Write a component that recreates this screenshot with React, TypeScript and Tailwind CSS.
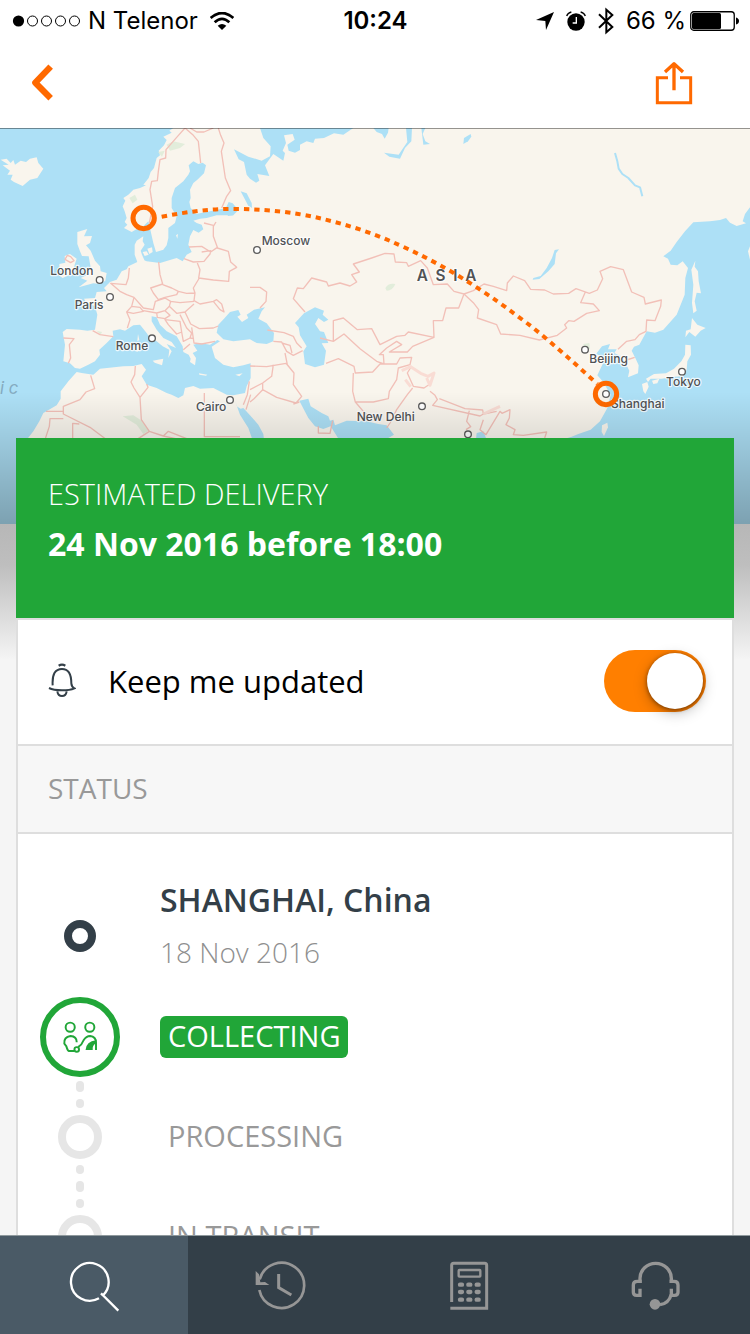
import React from 'react';

type Point = [x: number, y: number];

const LAND = '#f9f5ed';
const WATER = '#ade0f6';

const waters: string[] = [
  // Atlantic, North Sea, Baltic and Mediterranean
  'M0 0H520L508 8L515 14L490 26L500 36L492 52L476 68L480 82L470 90L462 120L452 132L446 150L430 170L438 172L420 180L400 185L385 200L370 210L376 218L368 235L374 250L380 270L374 282L382 290L372 300L395 312L412 302L430 295L445 280L452 310L460 345L468 372L490 365L500 352L505 330L505 300L525 285L530 265L515 240L515 210L525 180L550 160L565 140L570 130L566 112L580 100L595 108L608 104L618 112L612 136L592 155L580 165L570 185L572 210L568 222L572 240L588 258L630 250L680 240L700 262L650 262L620 270L600 272L580 278L590 285L605 290L610 304L596 314L580 306L570 325L565 350L575 372L560 380L548 400L530 390L510 396L480 405L440 400L415 390L412 402L385 415L380 424L365 430L350 455L330 462L312 480L320 490L290 492L285 510L252 512L258 522L285 535L292 560L285 605L262 608L240 605L200 603L188 612L195 650L190 700L210 706L225 720L240 722L265 710L285 700L300 680L298 665L320 645L340 625L338 608L360 604L375 608L400 592L420 590L440 615L450 630L470 640L488 655L508 665L505 690L515 670L500 648L528 660L515 642L490 630L470 605L455 580L455 565L470 568L480 590L500 610L530 625L548 655L550 672L566 680L572 692L570 702L585 712L588 690L578 675L592 668L580 650L600 645L630 650L652 636L660 640L635 656L645 690L670 710L700 718L730 712L752 706L752 750L740 775L735 795L700 802L680 800L640 780L600 782L580 774L555 780L550 802L535 810L515 800L500 795L470 780L440 770L425 745L438 725L425 708L400 714L370 715L300 722L280 740L245 735L230 732L205 760L182 790L182 812L170 832L130 855L118 880L100 910L80 935L60 1188H0Z',
  // Black Sea and Azov
  'M650 614L655 590L672 572L690 552L715 546L722 560L712 566L726 582L745 570L740 560L762 545L795 538L785 550L775 572L800 586L822 615L820 640L800 648L770 645L750 634L700 640L670 634Z',
  // Caspian
  'M885 585L912 556L945 538L972 548L968 560L985 575L972 582L955 570L945 588L960 610L972 612L985 645L965 646L978 668L972 710L945 718L915 708L910 670L920 655L900 622L896 598Z',
  // Persian Gulf and Arabian Sea
  'M898 818L925 812L932 835L965 855L985 865L990 878L1000 875L1005 892L1040 878L1100 880L1135 888L1160 892L1182 920L1165 930L1190 945L1200 1188H1060L1020 940L992 895L970 903L945 895L925 870L912 845Z',
  // Red Sea
  'M704 815L712 836L722 842L730 840L750 862L775 890L790 918L800 1000L780 1000L745 900L720 860Z',
  // White Sea and Arctic coast
  'M780 0L790 30L812 55L810 85L785 98L745 86L702 64L716 94L732 102L740 140L750 152L768 164L778 158L772 138L808 144L795 112L820 78L850 98L855 75L848 68L858 45L852 22L878 18L884 35L862 50L866 68L885 74L900 66L900 50L920 40L940 45L945 32L972 30L1002 16L1030 20L1060 0Z',
  'M1120 0H1166L1164 14L1154 32L1146 18L1130 12Z',
  'M1218 0H1236L1234 40L1215 60L1200 92L1168 86L1152 74L1196 80L1208 62L1222 42Z',
  'M1264 0H1276L1268 18L1276 40L1290 48L1270 50Z',
  'M1390 48L1392 30L1412 18L1414 26L1404 40Z',
  // Ladoga and Onega
  'M676 244L686 222L698 226L715 246L700 262L684 264Z',
  'M722 190L740 196L755 225L756 240L744 232Z',
  // Baikal
  'M1677 364L1668 376L1664 408L1645 430L1618 453L1598 455L1600 450L1622 444L1640 420L1656 390L1664 366Z',
  // Pacific, Sea of Japan, Yellow Sea
  'M2250 238L2235 258L2228 280L2238 286L2210 294L2190 284L2178 270L2160 276L2130 280L2080 283L2055 310L2030 342L2012 368L1990 385L2004 392L2012 410L2032 412L2048 400L2064 420L2056 450L2054 500L2030 560L1990 605L1965 614L1940 610L1918 650L1902 656L1895 668L1906 690L1916 712L1914 736L1884 748L1888 728L1874 700L1862 684L1836 672L1808 686L1788 678L1806 655L1830 648L1824 664L1850 664L1840 680L1812 700L1792 742L1808 760L1832 800L1822 840L1800 880L1772 905L1735 918L1715 926L1650 945L1600 1000V1188H2250Z',
  'M1430 915L1450 910L1460 935L1480 1188H1400Z',
];

const lands: string[] = [
  'M2 95L20 92L32 105L40 96L45 110L62 98L78 102L90 92L110 88L115 105L130 122L112 150L90 155L68 174L42 162L32 155L38 140L22 140L30 128L8 112L26 110Z',
  'M232 312L262 303L252 325L276 324L270 345L258 352L272 368L285 398L300 415L302 430L320 435L316 458L300 468L280 466L236 478L262 458L242 450L262 440L252 425L272 418L266 385L246 384L240 370L232 348Z',
  'M178 408L196 404L194 384L210 378L230 392L224 410L218 436L188 450L176 442L190 430L178 425Z',
  'M404 350L410 338L430 325L428 340L434 350L422 368L426 380L434 398L412 402L404 380Z',
  'M428 372L440 370L446 380L434 384ZM442 362L456 358L458 372L448 378Z',
  'M414 618L418 636L412 640ZM408 648L418 646L418 668L410 672Z',
  'M458 698L490 692L486 712L464 704Z',
  'M597 736L622 740L618 743L598 740ZM706 740L728 736L718 745Z',
  'M528 322L534 318L532 332Z',
  'M2086 398L2084 416L2094 430L2096 460L2103 496L2090 494L2084 520L2090 548L2080 556L2076 525L2080 470L2074 425Z',
  'M2076 570L2092 590L2117 600L2102 608L2086 626L2068 612L2056 628L2058 608L2072 604Z',
  'M2056 650L2072 652L2073 680L2062 700L2060 725L2048 745L2020 746L1985 752L1952 752L1944 762L1938 752L1962 738L1998 736L2022 722L2044 700L2055 680Z',
  'M1926 768L1942 762L1946 776L1936 798L1930 790ZM1956 758L1978 752L1972 766L1960 768Z',
  'M1806 892L1822 884L1824 898L1812 924L1805 912Z',
  'M2250 355L2244 370L2250 395Z',
];

const borders: string[] = [
  // Scandinavia and Finland
  'M555 0L530 28L498 65L497 90L480 95L475 130L472 158L455 160L450 185L458 235L448 285M555 0L580 22L595 40L602 105M570 0L590 12L612 12L640 0M655 0L662 22L672 45L664 70L676 150L692 188L680 205L665 240',
  // Eastern Europe
  'M648 282L640 295L640 325L652 358L632 372L605 355L567 357M612 285L640 292M605 372L632 368L630 378L612 400L580 402L552 392M652 360L685 370L692 402L710 418L688 430L686 460L640 456L596 450L600 425L592 405M476 402L480 440L488 468L452 480L460 495L475 515L495 508L530 500L535 490L515 480L488 470M535 490L560 496L585 495L580 480L598 450M585 495L582 518L600 528L640 520L660 545L672 552L665 528L650 515L640 520',
  // Western and central Europe
  'M388 420L385 450L378 470L332 466L360 490L380 500L402 508L395 535L380 552L390 575L382 600M402 508L430 540L460 545L466 520L495 510L512 520L508 535L495 548L470 555L430 548M380 552L400 556L430 550L420 538L395 535M512 520L540 524L582 520M508 535L530 556L555 552L582 528M470 555L472 568L495 572L510 562L495 548M495 575L540 580L545 612L530 618L505 590ZM540 560L560 600L575 615L570 630L550 640L545 612M555 552L572 588L598 602L640 600L655 594M575 598L582 645L605 648L645 640M570 630L582 632M550 665L570 648M278 608L300 620L340 626M190 630L222 632L208 650L212 690L205 706',
  // Africa and the Levant
  'M406 714L404 740L393 762L402 780L420 808L424 875L448 910L410 935M420 808L444 778L440 768M272 742L284 782L258 792L240 815L190 835L190 858L270 898L320 935M190 850H138M190 872H150L148 895L135 935M218 935V886L238 888M448 910L490 924L540 935M490 924L505 910L560 932M613 795V926H720M748 760L742 800L730 830M752 800L738 845',
  // Middle East
  'M750 714L800 716L858 706L882 735L880 770L905 805L888 825L830 808L788 785L762 812L750 822M820 710L815 745L788 765L750 785M788 765L788 785M802 606L852 614L880 625L890 645L905 660M820 640L845 642L860 670L880 682L908 668M845 645L870 652L876 675M855 675L862 710L882 735M898 822L880 828M955 895L955 915L990 916L998 878M750 478L780 478L800 492L798 520L780 540',
  // Kazakhstan and Central Asia
  'M915 552L880 512L892 480L910 482L935 450L980 462L985 474L1020 465L1050 474L1070 462L1055 440L1078 432L1060 408L1115 390L1155 376L1182 378L1186 402L1220 404L1225 415L1262 398L1282 420L1300 470L1342 468L1362 490L1392 498L1376 540L1338 540L1328 578L1300 578L1302 628L1225 612L1215 622L1190 625L1140 650L1115 602L1072 605L1030 570L1000 578V640L960 630',
  'M1000 640L1032 618L1080 662L1130 700L1152 708L1150 680L1138 680L1160 660L1190 640L1205 650L1168 672L1222 672L1238 655L1302 628M978 706L1015 692L1062 715L1066 735L1118 732L1140 708L1190 708L1200 690L1235 688L1230 710L1195 720L1190 755L1168 790L1165 812L1120 822L1066 822L1058 790L1060 735M1066 822L1090 850L1110 870M1238 780L1222 800L1190 845L1170 885L1160 900',
  // Mongolia and China
  'M1392 498L1420 488L1452 468L1480 475L1520 488L1522 465L1540 444L1574 458L1592 484L1634 486L1660 498L1706 496L1728 482L1768 496L1792 486L1808 452L1800 430L1832 416L1870 425L1895 492L1932 508L1936 528L1984 516L1982 535L1965 578L1940 576L1938 610L1918 620L1905 635L1880 640L1854 664M1392 498L1420 524L1436 545L1432 570L1490 590L1502 618L1560 622L1618 636L1672 622L1700 600L1694 590L1706 578L1722 580L1760 556L1798 548L1780 528L1742 524L1756 492M1880 696L1904 688',
  // Himalaya and South-East Asia
  'M1235 714L1222 735L1240 775L1272 780L1290 768M1290 790L1305 802L1312 815L1298 832L1440 864L1450 858L1448 846L1395 842L1318 812M1450 858L1490 850M1408 848L1400 880L1412 896L1398 905M1450 875L1440 905L1458 920L1500 850L1506 856L1530 845L1528 870L1518 890L1545 905L1540 920L1570 922L1640 912L1634 930',
];

const cities: Point[] = [
  [299, 456], [330, 507], [456, 631], [690, 816], [771, 366], [1266, 835],
  [1404, 919], [1755, 665], [2046, 731], [1818, 798],
];

const cityLabels: { name: string; x: number; y: number }[] = [
  { name: 'London', x: 151, y: 440 },
  { name: 'Paris', x: 224, y: 542 },
  { name: 'Rome', x: 347, y: 667 },
  { name: 'Cairo', x: 588, y: 850 },
  { name: 'Moscow', x: 785, y: 351 },
  { name: 'New Delhi', x: 1070, y: 879 },
  { name: 'Beijing', x: 1768, y: 705 },
  { name: 'Tokyo', x: 1998, y: 774 },
  { name: 'Shanghai', x: 1833, y: 839 },
];

function RouteMap() {
  return (
    <svg
      viewBox="0 0 2250 1188"
      preserveAspectRatio="xMidYMin slice"
      className="block h-full w-full"
      role="img"
      aria-label="Route from Norway to Shanghai"
    >
      <rect width="2250" height="1188" fill={LAND} />
      {waters.map((d) => <path key={d} d={d} fill={WATER} />)}
      {lands.map((d) => <path key={d} d={d} fill={LAND} />)}
      <path d="M1845 75L1852 100L1856 122L1867 138L1885 150L1905 172L1920 178L1927 205" fill="none" stroke={WATER} strokeWidth="6" strokeLinejoin="round" />
      <g fill="#dcebd6" opacity="0.8">
        <path d="M500 50L520 40L555 48L540 60L510 68ZM474 72L494 68L486 86ZM388 210L405 200L412 215L398 226ZM290 608L306 612L302 620ZM368 865L400 862L425 878L445 908L430 918L410 890ZM1156 480Q1165 464 1186 468Q1178 488 1160 488Z" />
        <path d="M1750 648L1768 645L1770 662L1752 668ZM1782 812L1796 818L1788 828Z" />
      </g>
      <g fill="none" stroke="#f2c0b8" strokeWidth="4" strokeLinejoin="round">
        {borders.map((d) => <path key={d} d={d} />)}
        <path d="M195 394L202 382L212 386L222 398L212 404Z" />
      </g>
      <path d="M1205 728L1232 716L1262 736L1284 745L1302 735L1290 772L1280 750M1216 755L1232 776M1450 858L1500 835" fill="none" stroke="#f9dcd4" strokeWidth="9" strokeLinejoin="round" />

      <g fill="#ffffff" stroke="#5c5c5c" strokeWidth="4">
        {cities.map(([x, y]) => <circle key={`${x}-${y}`} cx={x} cy={y} r="10" />)}
      </g>
      <g
        fontFamily='Inter, "Liberation Sans", sans-serif'
        fontSize="36"
        fontWeight="500"
        fill="#505254"
        stroke="#ffffff"
        strokeOpacity="0.8"
        strokeWidth="7"
        strokeLinejoin="round"
        paintOrder="stroke"
      >
        {cityLabels.map(({ name, x, y }) => <text key={name} x={x} y={y}>{name}</text>)}
        <text x="1250" y="459" fontSize="46" fontWeight="600">{'A\u00a0\u00a0S\u00a0\u00a0I\u00a0\u00a0A'}</text>
      </g>
      <text x="0" y="798" fontFamily='Inter, "Liberation Sans", sans-serif' fontStyle="italic" fontSize="50" fill="#84abc0">
        {'i\u00a0c'}
      </text>

      <g fill="none" stroke="#ff6900">
        <path
          d="M485 266C560 252 620 244 680 243C755 242 830 247 895 258C950 267 1000 280 1050 295C1100 310 1150 329 1195 350C1245 372 1290 395 1335 420C1390 451 1445 487 1495 522C1530 547 1563 572 1595 596C1660 648 1725 707 1792 768"
          strokeWidth="12"
          strokeDasharray="16 15"
        />
        <circle cx="431" cy="270" r="32" strokeWidth="15" />
        <circle cx="1818" cy="798" r="32" strokeWidth="15" />
      </g>
    </svg>
  );
}

function StatusBar() {
  return (
    <div className="grid h-[42px] shrink-0 grid-cols-3 items-center pr-[11px] pl-3 font-['Inter','Liberation_Sans',sans-serif] text-2xl text-black">
      <div className="flex items-center gap-2">
        <svg width="68" height="12" viewBox="0 0 68 12" aria-hidden="true">
          <circle cx="6.5" cy="6" r="5.6" />
          {[20.5, 34.5, 48.5, 62.5].map((cx) => (
            <circle key={cx} cx={cx} cy="6" r="5" fill="none" stroke="black" />
          ))}
        </svg>
        <span className="whitespace-nowrap">N Telenor</span>
        <svg className="ml-1" width="24" height="18" viewBox="0 0 72 54" fill="none" stroke="black" strokeWidth="8" aria-hidden="true">
          <path d="M2 18Q36 -12 70 18" />
          <path d="M14 31Q36 10 58 31" />
          <path d="M23 41Q36 31 49 41L36 54Z" fill="black" stroke="none" />
        </svg>
      </div>
      <time className="text-center font-semibold">10:24</time>
      <div className="flex items-center justify-end whitespace-nowrap">
        <svg className="mr-3" width="18" height="18" viewBox="0 0 54 54" aria-hidden="true">
          <path d="M54 0L30 54L28 27L0 24Z" />
        </svg>
        <svg className="mr-3" width="20" height="20" viewBox="0 0 60 60" aria-hidden="true">
          <circle cx="30" cy="33" r="26" />
          <path d="M2 15Q5 6 16 3M44 3Q55 6 58 15" fill="none" stroke="black" strokeWidth="4" />
          <path d="M31 18V36H20" fill="none" stroke="white" strokeWidth="4" />
        </svg>
        <svg className="mr-3" width="16" height="28" viewBox="0 0 48 84" fill="none" stroke="black" strokeWidth="6" aria-hidden="true">
          <path d="M3 22L43 60L25 76V8L43 24L3 62" />
        </svg>
        <span className="mr-1">66 %</span>
        <svg width="49" height="20" viewBox="0 0 49 20" aria-hidden="true">
          <rect x="0.75" y="0.75" width="43.5" height="18.5" rx="3" fill="none" stroke="black" strokeWidth="1.3" />
          <rect x="2" y="2" width="29" height="16" rx="1.5" />
          <path d="M46 6.500Q49 7.500 49 10T46 13.500Z" />
        </svg>
      </div>
    </div>
  );
}

function Header() {
  return (
    <header className="flex h-[86px] shrink-0 items-center justify-between pr-14 pb-1 pl-7">
      <button type="button" aria-label="Back">
        <svg width="28" height="40" viewBox="0 0 84 120" fill="none" stroke="#ff6900" strokeWidth="19" aria-hidden="true">
          <path d="M68 11L22 59L68 106" strokeLinejoin="round" />
        </svg>
      </button>
      <button type="button" aria-label="Share">
        <svg width="40" height="44" viewBox="837 182 120 132" fill="none" stroke="#ff6900" strokeWidth="9" aria-hidden="true">
          <path d="M879 232H847V307H947V232H915" />
          <path d="M897 270V192M870 215L897 190L924 215" strokeWidth="10" strokeLinejoin="round" />
        </svg>
      </button>
    </header>
  );
}

function BellIcon() {
  return (
    <svg width="28" height="36" viewBox="144 701 84 108" fill="none" stroke="#333f48" strokeWidth="6" aria-hidden="true">
      <path d="M176 709Q186 703 196 709" strokeWidth="7" />
      <path d="M158 768C156 735 165 719 186 719S214 735 214 762Q215 773 223 777Q210 783 186 783Q160 783 147 776" />
      <path d="M172 786Q174 800 186 800T200 786" />
    </svg>
  );
}

function HandoverIcon() {
  return (
    <svg width="36" height="32" viewBox="186 484 108 98" fill="none" stroke="#21a638" strokeWidth="6" aria-hidden="true">
      <circle cx="210" cy="503" r="14" />
      <circle cx="270" cy="503" r="14" />
      <path d="M230 549Q230 531 211 530Q190 533 192 553L198 561Q202 575 206 576H222" />
      <circle cx="230" cy="571" r="7" />
      <path d="M234 564Q246 557 251 543Q259 530 271 530Q289 532 289 550V573" />
      <path d="M257 573Q259 546 289 543V552Q277 558 279 573Z" fill="#21a638" stroke="none" />
    </svg>
  );
}

type StepState = 'origin' | 'active' | 'pending';

function StepMarker({ state }: { state: StepState }) {
  if (state === 'active') {
    return (
      <span className="flex size-20 items-center justify-center rounded-full border-6 border-[#21a638]">
        <HandoverIcon />
      </span>
    );
  }
  if (state === 'origin') return <span className="size-8 rounded-full border-8 border-[#333f48]" />;
  return <span className="size-11 rounded-full border-8 border-[#e6e6e6]" />;
}

function Connector({ dots }: { dots: 2 | 3 }) {
  return (
    <span className="flex w-20 flex-col items-center gap-[7px] py-1">
      {dots === 3 && <span className="mt-[2px] h-[9px] w-2 rounded-full bg-[#e6e6e6]" />}
      <span className="h-[11px] w-2 rounded-full bg-[#e6e6e6]" />
      <span className="mb-[3px] h-[9px] w-2 rounded-full bg-[#e6e6e6]" />
    </span>
  );
}

function Timeline() {
  return (
    <ol className="pt-10 pl-[22px] text-[29px]">
      <li className="flex gap-10">
        <span className="flex w-20 items-center justify-center">
          <StepMarker state="origin" />
        </span>
        <div className="pb-[19px] leading-[52px]">
          <h2 className="text-[32px] font-semibold text-[#333f48]">SHANGHAI, China</h2>
          <p className="text-[28px] font-light text-[#8f8f8f]">18 Nov 2016</p>
        </div>
      </li>
      <li>
        <div className="flex items-center gap-10">
          <StepMarker state="active" />
          <span className="rounded-md bg-[#21a638] px-2 pb-0.5 leading-[40px] text-white">COLLECTING</span>
        </div>
        <Connector dots={2} />
      </li>
      {['PROCESSING', 'IN TRANSIT'].map((name, index, all) => (
        <li key={name}>
          <div className="flex items-center gap-10">
            <span className="flex w-20 justify-center">
              <StepMarker state="pending" />
            </span>
            <span className="px-2 pb-0.5 leading-[40px] text-[#999999]">{name}</span>
          </div>
          {index < all.length - 1 && <Connector dots={3} />}
        </li>
      ))}
    </ol>
  );
}

function SearchIcon() {
  return (
    <svg width="50" height="50" viewBox="207 105 150 150" fill="none" stroke="currentColor" strokeWidth="7" className="overflow-visible" aria-hidden="true">
      <path d="M297 220A56.500 56.500 0 1 1 309 211L355 257M309 211L303 205" />
    </svg>
  );
}

function HistoryIcon() {
  return (
    <svg width="50" height="50" viewBox="769 105 150 150" fill="none" stroke="currentColor" strokeWidth="8" className="overflow-visible" aria-hidden="true">
      <path d="M779 195A68 68 0 1 0 780 163" />
      <path d="M837 147V188L875 210" strokeWidth="9" />
      <path d="M768 138V180H809L796 171L782 172L778 148Z" fill="currentColor" stroke="none" />
    </svg>
  );
}

function CalculatorIcon() {
  return (
    <svg width="50" height="50" viewBox="206 105 150 150" fill="none" stroke="currentColor" strokeWidth="9" aria-hidden="true">
      <path d="M229 231V121Q229 115 235 115H328Q334 115 334 121V250H225" />
      <rect x="250" y="135" width="65" height="20" rx="2" strokeWidth="7" />
      {[179, 201, 224].map((y) => (
        <path key={y} d={`M254 ${y}H260M279 ${y}H285M304 ${y}H310`} strokeWidth="13" strokeLinecap="round" />
      ))}
    </svg>
  );
}

function HeadsetIcon() {
  return (
    <svg width="50" height="50" viewBox="769 105 150 150" fill="none" stroke="currentColor" strokeWidth="10" aria-hidden="true">
      <path d="M796 174V160A46 44 0 0 1 890 160V174" />
      <path d="M801 169H788Q776 169 776 180V202Q776 211 786 211H796V191" />
      <path d="M885 169H898Q910 169 910 180V202Q910 211 900 211H890V191" />
      <path d="M890 208Q882 236 856 239" />
      <circle cx="841" cy="238" r="16" fill="currentColor" stroke="none" />
    </svg>
  );
}

const tabs = [
  { label: 'Track', Icon: SearchIcon, active: true },
  { label: 'History', Icon: HistoryIcon, active: false },
  { label: 'Calculator', Icon: CalculatorIcon, active: false },
  { label: 'Support', Icon: HeadsetIcon, active: false },
];

export default function App() {
  return (
    <div className="flex h-screen flex-col bg-white font-['Open_Sans','Noto_Sans',sans-serif]">
      <StatusBar />
      <Header />

      <main className="min-h-0 flex-1 overflow-x-hidden overflow-y-auto bg-[#f5f5f5] [scrollbar-width:none]">
        <div className="relative h-[396px]">
          <RouteMap />
          <div className="absolute inset-x-0 top-0 h-px bg-black/40" />
          <div className="absolute inset-x-0 bottom-0 h-[132px] bg-linear-to-b from-transparent to-black/28" />
          <div className="absolute inset-x-0 top-full h-[136px] bg-linear-to-b from-[#b7b7b7] via-[#bebebe] via-30% to-[#f5f5f5]" />
        </div>

        <section className="relative mx-4 -mt-[86px]">
          <div className="bg-[#21a638] px-8 pt-8 pb-12 text-white">
            <p className="text-[29px] leading-[48px] font-light">ESTIMATED DELIVERY</p>
            <p className="text-[32px] leading-[52px] font-bold">24 Nov 2016 before 18:00</p>
          </div>

          <div className="border-2 border-[#dedede] bg-white">
            <label className="flex h-[124px] items-center pr-[26px] pb-0.5 pl-[30px]">
              <BellIcon />
              <span className="ml-8 flex-1 text-[31px] text-black">Keep me updated</span>
              <input type="checkbox" defaultChecked className="peer sr-only" />
              <span className="flex h-[62px] w-[102px] items-center rounded-full bg-gray-300 px-[3px] peer-checked:justify-end peer-checked:bg-[#ff7f00]">
                <span className="size-14 rounded-full bg-white shadow-[0_4px_14px_rgba(0,0,0,0.25),0_1px_4px_rgba(0,0,0,0.45)]" />
              </span>
            </label>
            <h1 className="border-y-2 border-[#dedede] bg-[#f7f7f7] px-[30px] pb-0.5 text-[28px] leading-[84px] text-[#999999]">
              STATUS
            </h1>
            <Timeline />
          </div>
        </section>
      </main>

      <nav className="grid h-[99px] shrink-0 grid-cols-4 border-t border-[#8f999d] bg-[#333f48]">
        {tabs.map(({ label, Icon, active }) => (
          <button
            key={label}
            type="button"
            aria-label={label}
            aria-current={active ? 'page' : undefined}
            className={`flex items-center justify-center ${active ? 'bg-[#4a5a66] text-white' : 'text-[#969696]'}`}
          >
            <Icon />
          </button>
        ))}
      </nav>
    </div>
  );
}
